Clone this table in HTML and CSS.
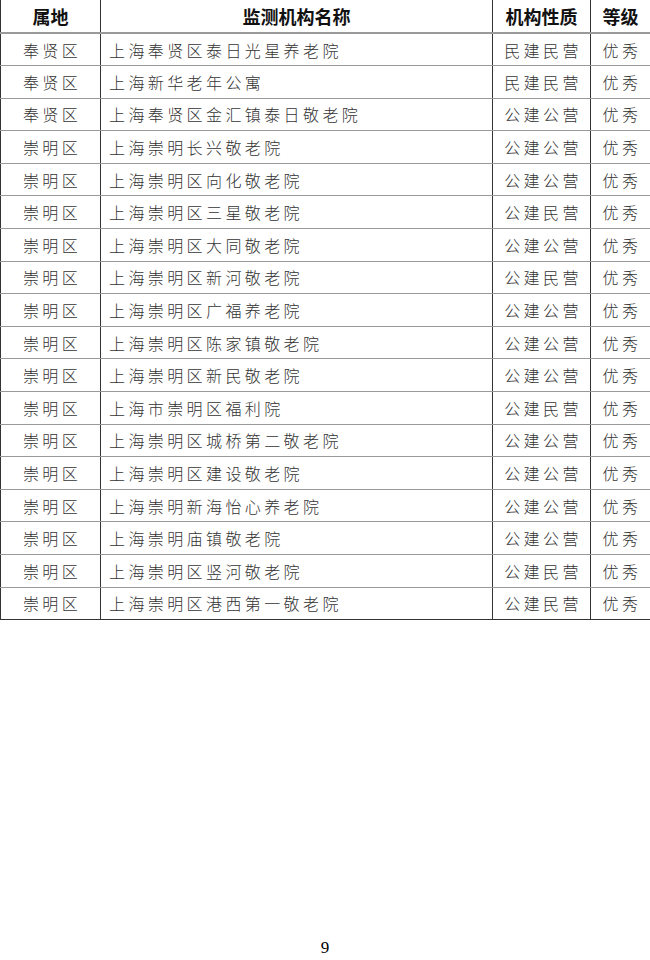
FILE: index.html
```html
<!DOCTYPE html>
<html lang="zh-CN">
<head>
<meta charset="utf-8">
<link rel="stylesheet" href="styles.css">
</head>
<body>
<div class="page">
<table class="list">
<colgroup><col class="c1"><col class="c2"><col class="c3"><col class="c4"></colgroup>
<thead>
<tr><th>属地</th><th>监测机构名称</th><th>机构性质</th><th>等级</th></tr>
</thead>
<tbody>
<tr><td>奉贤区</td><td class="name">上海奉贤区泰日光星养老院</td><td>民建民营</td><td>优秀</td></tr>
<tr><td>奉贤区</td><td class="name">上海新华老年公寓</td><td>民建民营</td><td>优秀</td></tr>
<tr><td>奉贤区</td><td class="name">上海奉贤区金汇镇泰日敬老院</td><td>公建公营</td><td>优秀</td></tr>
<tr><td>崇明区</td><td class="name">上海崇明长兴敬老院</td><td>公建公营</td><td>优秀</td></tr>
<tr><td>崇明区</td><td class="name">上海崇明区向化敬老院</td><td>公建公营</td><td>优秀</td></tr>
<tr><td>崇明区</td><td class="name">上海崇明区三星敬老院</td><td>公建民营</td><td>优秀</td></tr>
<tr><td>崇明区</td><td class="name">上海崇明区大同敬老院</td><td>公建公营</td><td>优秀</td></tr>
<tr><td>崇明区</td><td class="name">上海崇明区新河敬老院</td><td>公建民营</td><td>优秀</td></tr>
<tr><td>崇明区</td><td class="name">上海崇明区广福养老院</td><td>公建公营</td><td>优秀</td></tr>
<tr><td>崇明区</td><td class="name">上海崇明区陈家镇敬老院</td><td>公建公营</td><td>优秀</td></tr>
<tr><td>崇明区</td><td class="name">上海崇明区新民敬老院</td><td>公建公营</td><td>优秀</td></tr>
<tr><td>崇明区</td><td class="name">上海市崇明区福利院</td><td>公建民营</td><td>优秀</td></tr>
<tr><td>崇明区</td><td class="name">上海崇明区城桥第二敬老院</td><td>公建公营</td><td>优秀</td></tr>
<tr><td>崇明区</td><td class="name">上海崇明区建设敬老院</td><td>公建公营</td><td>优秀</td></tr>
<tr><td>崇明区</td><td class="name">上海崇明新海怡心养老院</td><td>公建公营</td><td>优秀</td></tr>
<tr><td>崇明区</td><td class="name">上海崇明庙镇敬老院</td><td>公建公营</td><td>优秀</td></tr>
<tr><td>崇明区</td><td class="name">上海崇明区竖河敬老院</td><td>公建民营</td><td>优秀</td></tr>
<tr><td>崇明区</td><td class="name">上海崇明区港西第一敬老院</td><td>公建民营</td><td>优秀</td></tr>
</tbody>
</table>
<div class="pageno">9</div>
</div>
</body>
</html>
```
FILE: styles.css
```css
html, body {
  margin: 0;
  padding: 0;
  background: #fff;
}
.page {
  width: 650px;
  height: 960px;
  position: relative;
}
.list {
  width: 650px;
  border-collapse: collapse;
  table-layout: fixed;
  font-family: "Noto Sans CJK SC", "Liberation Serif", sans-serif;
  color: #222;
}
.c1 { width: 100px; }
.c2 { width: 392px; }
.c3 { width: 98px; }
.c4 { width: 60px; }
.list th, .list td {
  border-left: 1px solid #333;
  border-right: 1px solid #333;
  border-bottom: 1px solid #999;
  padding: 0;
  text-align: center;
  white-space: nowrap;
  overflow: hidden;
}
.list thead tr {
  height: 33px;
}
.list th {
  font-size: 18px;
  font-weight: 700;
  color: #111;
  border-bottom: 2px solid #999;
  line-height: 30px;
}
.list tbody tr {
  height: 32.6px;
}
.list td {
  font-size: 16px;
  font-weight: 300;
  letter-spacing: 3.4px;
  line-height: 30px;
  color: #333;
}
.list td:first-child,
.list td:nth-child(3),
.list td:nth-child(4) {
  text-indent: 3px;
}
.list tbody tr:last-child td {
  border-bottom: 1px solid #333;
}
.list td.name {
  text-align: left;
  padding-left: 8px;
}
.pageno {
  position: absolute;
  left: 0;
  right: 0;
  top: 938px;
  text-align: center;
  font-family: "Liberation Serif", serif;
  font-size: 17px;
  color: #000;
}
```
